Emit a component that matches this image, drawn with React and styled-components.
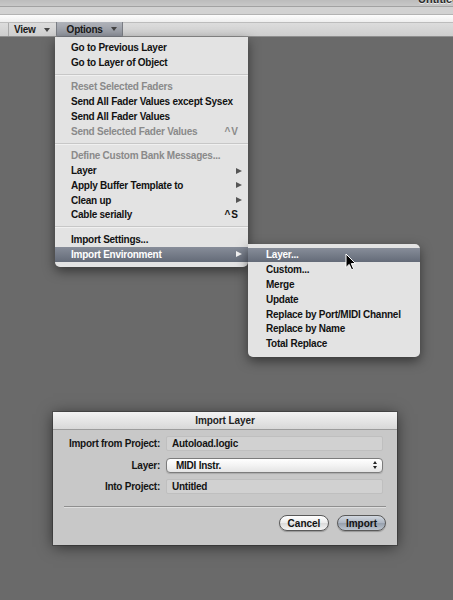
import React from "react";
import styled, { createGlobalStyle, css } from "styled-components";

const GlobalStyle = createGlobalStyle`
  html, body { margin: 0; padding: 0; background: #6a6a6a; }
  body {
    font-family: "Liberation Sans", Arial, Helvetica, sans-serif;
    width: 453px; height: 600px; overflow: hidden;
  }
  * { box-sizing: border-box; }
`;

const Screen = styled.div`
  position: relative;
  width: 453px;
  height: 600px;
  background: #6a6a6a;
  display: flex;
  flex-direction: column;
  overflow: hidden;
`;

const TitleStrip = styled.div`
  height: 7px;
  flex: none;
  background: linear-gradient(#bcbcbc, #c8c8c8);
  border-bottom: 1px solid #a2a2a2;
  overflow: hidden;
  display: flex;
  padding-left: 418px;
`;

const TitleText = styled.span`
  font-size: 11px;
  font-weight: bold;
  line-height: 11px;
  margin-top: -6px;
  color: #2a2a2a;
  text-shadow: 0 1px 0 rgba(255, 255, 255, 0.7);
  white-space: nowrap;
`;

const BandStrip = styled.div`
  height: 8px;
  flex: none;
  background: #d2d2d2;
  border-bottom: 1px solid #b3b3b3;
`;

const ToolStrip = styled.div`
  height: 7px;
  flex: none;
  background: linear-gradient(#fdfdfd, #eeeeee);
`;

const MenuBar = styled.div`
  height: 15px;
  flex: none;
  display: flex;
  align-items: stretch;
  padding-left: 8px;
  background: linear-gradient(#dcdcdc, #cecece);
  border-top: 1px solid #bcbcbc;
  border-bottom: 1px solid #8e8e8e;
`;

const BarItem = styled.div`
  display: flex;
  align-items: center;
  font-size: 10px;
  font-weight: bold;
  letter-spacing: -0.25px;
  color: #1a1a1a;
  padding: 0 ${(p) => (p.$active ? "5px 0 10px" : "6px 0 5px")};
  border-left: 1px solid #a9a9a9;
  ${(p) =>
    p.$active &&
    css`
      background: linear-gradient(#b0b3ba, #8f939c);
      border: 1px solid #7a7d84;
      border-top: none;
      margin-top: -1px;
      margin-bottom: -1px;
      border-radius: 0 0 2px 2px;
    `}
`;

const BarLabel = styled.span`
  margin-right: 8px;
`;

const DownArrow = styled.span`
  width: 0;
  height: 0;
  border-left: 3px solid transparent;
  border-right: 3px solid transparent;
  border-top: 4px solid #444;
`;

const Content = styled.div`
  position: relative;
  flex: 1;
  display: flex;
  flex-direction: column;
  align-items: flex-start;
`;

const Menu = styled.div`
  position: absolute;
  left: ${(p) => p.$left}px;
  top: ${(p) => p.$top}px;
  width: ${(p) => p.$width}px;
  padding: ${(p) => p.$pad};
  background: rgba(229, 229, 229, 0.98);
  border-radius: ${(p) => p.$radius};
  box-shadow: 0 4px 12px rgba(0, 0, 0, 0.5);
  z-index: ${(p) => p.$z || 5};
`;

const Item = styled.div`
  height: ${(p) => p.$h}px;
  display: flex;
  align-items: center;
  padding-left: ${(p) => p.$indent}px;
  padding-right: 6px;
  font-size: 10px;
  font-weight: bold;
  letter-spacing: -0.25px;
  white-space: nowrap;
  color: ${(p) => (p.$disabled ? "#8a8a8a" : "#121212")};
  ${(p) =>
    p.$selected &&
    css`
      background: linear-gradient(#878d99, #646b78);
      color: #fff;
    `}
`;

const ItemLabel = styled.span`
  flex: 1;
`;

const Shortcut = styled.span`
  margin-right: 3px;
  letter-spacing: 1px;
  color: inherit;
`;

const RightArrow = styled.span`
  width: 0;
  height: 0;
  border-top: 3.5px solid transparent;
  border-bottom: 3.5px solid transparent;
  border-left: 6px solid ${(p) => (p.$light ? "#f2f2f2" : "#555")};
`;

const Separator = styled.div`
  margin: 4px 0;
  border-top: 1px solid #c7c7c7;
  border-bottom: 1px solid #f0f0f0;
`;

const Cursor = styled.svg`
  position: absolute;
  left: 345px;
  top: 216px;
  z-index: 10;
`;

const Dialog = styled.div`
  margin-top: 375px;
  margin-left: 53px;
  width: 344px;
  height: 133px;
  display: flex;
  flex-direction: column;
  background: #c8c8c8;
  box-shadow: 0 2px 14px rgba(0, 0, 0, 0.55), 0 0 0 1px rgba(60, 60, 60, 0.5);
`;

const DialogTitle = styled.div`
  height: 18px;
  flex: none;
  display: flex;
  align-items: center;
  justify-content: center;
  background: linear-gradient(#f3f3f3, #d8d8d8);
  border-bottom: 1px solid #9c9c9c;
  font-size: 10px;
  font-weight: bold;
  color: #222;
  letter-spacing: -0.1px;
`;

const Form = styled.div`
  display: grid;
  grid-template-columns: 97px 217px;
  column-gap: 6px;
  row-gap: 6.5px;
  padding: 6px 14px 0 10px;
  align-items: center;
`;

const Label = styled.div`
  text-align: right;
  font-size: 10px;
  font-weight: bold;
  letter-spacing: -0.25px;
  color: #141414;
  white-space: nowrap;
`;

const Field = styled.div`
  height: 15px;
  display: flex;
  align-items: center;
  padding-left: 5px;
  background: #d1d1d1;
  border: 1px solid #bfbfbf;
  border-radius: 2px;
  font-size: 10px;
  font-weight: bold;
  letter-spacing: -0.25px;
  color: #141414;
`;

const Popup = styled.div`
  height: 15px;
  display: flex;
  align-items: center;
  padding: 0 5px 0 9px;
  background: linear-gradient(#ffffff, #f3f3f3 50%, #e4e4e4);
  border: 1px solid #7c7c7c;
  border-radius: 4px;
  box-shadow: 0 1px 1px rgba(0, 0, 0, 0.15);
  font-size: 10px;
  font-weight: bold;
  letter-spacing: -0.25px;
  color: #141414;
`;

const PopupText = styled.span`
  flex: 1;
`;

const Stepper = styled.span`
  display: flex;
  flex-direction: column;
  gap: 1.5px;
`;

const Tri = styled.span`
  width: 0;
  height: 0;
  border-left: 2px solid transparent;
  border-right: 2px solid transparent;
  ${(p) =>
    p.$up
      ? css`border-bottom: 3px solid #222;`
      : css`border-top: 3px solid #222;`}
`;

const Rule = styled.div`
  margin: 12px 11px 0 11px;
  border-top: 1px solid #8f8f8f;
  border-bottom: 1px solid #dedede;
`;

const ButtonRow = styled.div`
  display: flex;
  justify-content: flex-end;
  gap: 8px;
  padding: 7px 11px 0 0;
`;

const Button = styled.div`
  width: ${(p) => p.$w}px;
  height: 16px;
  display: flex;
  align-items: center;
  justify-content: center;
  border-radius: 8px;
  border: 1px solid #595959;
  font-size: 10px;
  font-weight: bold;
  color: #111;
  box-shadow: 0 1px 1px rgba(0, 0, 0, 0.25);
  background: ${(p) =>
    p.$default
      ? "linear-gradient(#d2d8e0, #aeb6c2 48%, #97a0ad 52%, #bcc4ce)"
      : "linear-gradient(#ffffff, #ececec 48%, #dadada 52%, #f4f4f4)"};
`;

const mainItems = [
  { label: "Go to Previous Layer" },
  { label: "Go to Layer of Object" },
  { sep: true },
  { label: "Reset Selected Faders", disabled: true },
  { label: "Send All Fader Values except Sysex" },
  { label: "Send All Fader Values" },
  { label: "Send Selected Fader Values", disabled: true, shortcut: "^V" },
  { sep: true },
  { label: "Define Custom Bank Messages...", disabled: true },
  { label: "Layer", arrow: true },
  { label: "Apply Buffer Template to", arrow: true },
  { label: "Clean up", arrow: true },
  { label: "Cable serially", shortcut: "^S" },
  { sep: true },
  { label: "Import Settings..." },
  { label: "Import Environment", arrow: true, selected: true },
];

const subItems = [
  { label: "Layer...", selected: true },
  { label: "Custom..." },
  { label: "Merge" },
  { label: "Update" },
  { label: "Replace by Port/MIDI Channel" },
  { label: "Replace by Name" },
  { label: "Total Replace" },
];

function MenuItems({ items, h, indent }) {
  return items.map((it, i) =>
    it.sep ? (
      <Separator key={i} />
    ) : (
      <Item
        key={i}
        $h={h}
        $indent={indent}
        $disabled={it.disabled}
        $selected={it.selected}
      >
        <ItemLabel>{it.label}</ItemLabel>
        {it.shortcut && <Shortcut>{it.shortcut}</Shortcut>}
        {it.arrow && <RightArrow $light={it.selected} />}
      </Item>
    )
  );
}

export default function App() {
  return (
    <Screen>
      <GlobalStyle />
      <TitleStrip>
        <TitleText>Untitled</TitleText>
      </TitleStrip>
      <BandStrip />
      <ToolStrip />
      <MenuBar>
        <BarItem>
          <BarLabel>View</BarLabel>
          <DownArrow />
        </BarItem>
        <BarItem $active>
          <BarLabel>Options</BarLabel>
          <DownArrow />
        </BarItem>
      </MenuBar>
      <Content>
        <Menu $left={55} $top={0} $width={193} $pad="3px 0 5px" $radius="0 0 5px 5px">
          <MenuItems items={mainItems} h={14.75} indent={16} />
        </Menu>
        <Menu
          $left={248}
          $top={207}
          $width={172}
          $pad="3.5px 0 6px"
          $radius="0 5px 5px 5px"
          $z={6}
        >
          <MenuItems items={subItems} h={14.8} indent={18} />
        </Menu>
        <Cursor width="12" height="18" viewBox="0 0 12 18">
          <path
            d="M1 1 L1 14.5 L4.2 11.4 L6.6 16.8 L8.6 15.9 L6.3 10.6 L10.6 10.6 Z"
            fill="#000"
            stroke="#fff"
            strokeWidth="1"
            strokeLinejoin="round"
          />
        </Cursor>
        <Dialog>
          <DialogTitle>Import Layer</DialogTitle>
          <Form>
            <Label>Import from Project:</Label>
            <Field>Autoload.logic</Field>
            <Label>Layer:</Label>
            <Popup>
              <PopupText>MIDI Instr.</PopupText>
              <Stepper>
                <Tri $up />
                <Tri />
              </Stepper>
            </Popup>
            <Label>Into Project:</Label>
            <Field>Untitled</Field>
          </Form>
          <Rule />
          <ButtonRow>
            <Button $w={50}>Cancel</Button>
            <Button $w={49} $default>
              Import
            </Button>
          </ButtonRow>
        </Dialog>
      </Content>
    </Screen>
  );
}
